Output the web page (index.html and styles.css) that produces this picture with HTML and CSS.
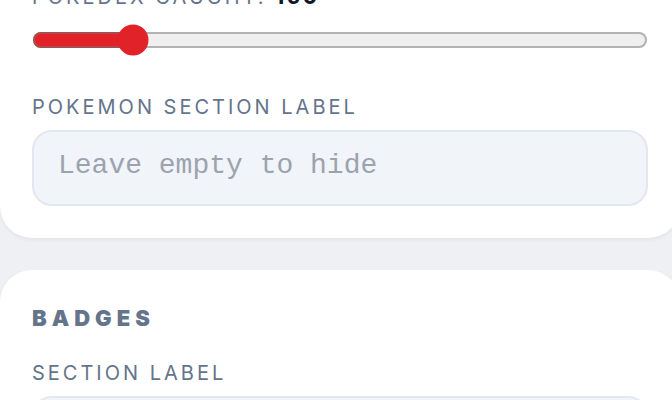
FILE: index.html
```html
<!DOCTYPE html>
<html lang="en">
<head>
    <meta charset="UTF-8">
    <meta name="viewport" content="width=device-width, initial-scale=1.0">
    <title>Trainer Card Editor</title>
    <link rel="stylesheet" href="styles.css">
</head>
<body>
    <form class="panels">
        <section class="panel panel-pokemon">
            <div class="field">
                <label for="pokedex">Pokedex caught: <strong id="pokedex-value">150</strong></label>
                <input type="range" id="pokedex" name="pokedex" min="0" max="1025" value="150">
            </div>
            <div class="field">
                <label for="pokemon-label">Pokemon section label</label>
                <input type="text" id="pokemon-label" name="pokemon_label" placeholder="Leave empty to hide">
            </div>
        </section>

        <section class="panel">
            <h2>Badges</h2>
            <div class="field">
                <label for="badges-label">Section label</label>
                <input type="text" id="badges-label" name="badges_label">
            </div>
        </section>
    </form>

    <script>
        var pokedex = document.getElementById('pokedex');

        pokedex.addEventListener('input', function () {
            document.getElementById('pokedex-value').textContent = pokedex.value;
        });
    </script>
</body>
</html>
```

FILE: styles.css
```css
* {
    box-sizing: border-box;
}

body {
    margin: 0;
    font-family: Inter, sans-serif;
    background-color: #eff0f4;
    color: #64748b;
    overflow: hidden;
}

.panels {
    display: flex;
    flex-direction: column;
    gap: 32px;
    margin-right: -8px;
}

.panel {
    display: flex;
    flex-direction: column;
    gap: 26px;
    padding: 32px;
    background-color: #ffffff;
    border-radius: 32px;
    box-shadow: 0 2px 4px rgba(0, 0, 0, 0.05);
}

/* the first panel starts above the visible area */
.panel-pokemon {
    margin-top: -48px;
}

h2 {
    margin: 0;
    font-size: 22px;
    line-height: 32px;
    font-weight: 900;
    letter-spacing: 5px;
    text-transform: uppercase;
}

.field {
    display: flex;
    flex-direction: column;
    gap: 10px;
}

label {
    font-size: 20px;
    line-height: 26px;
    letter-spacing: 3px;
    text-transform: uppercase;
}

label strong {
    color: #0f172a;
    font-weight: 800;
}

input[type="range"] {
    width: 100%;
    margin: 2px 0 6px;
    accent-color: #e12228;
    zoom: 2;
}

input[type="text"] {
    width: 100%;
    height: 76px;
    padding: 0 24px 6px;
    border: 2px solid #e2e8f0;
    border-radius: 20px;
    background-color: #f1f4f9;
    color: #0f172a;
    font-family: "Liberation Mono", monospace;
    font-size: 28px;
}

input[type="text"]::placeholder {
    color: #9ca3af;
}
```
